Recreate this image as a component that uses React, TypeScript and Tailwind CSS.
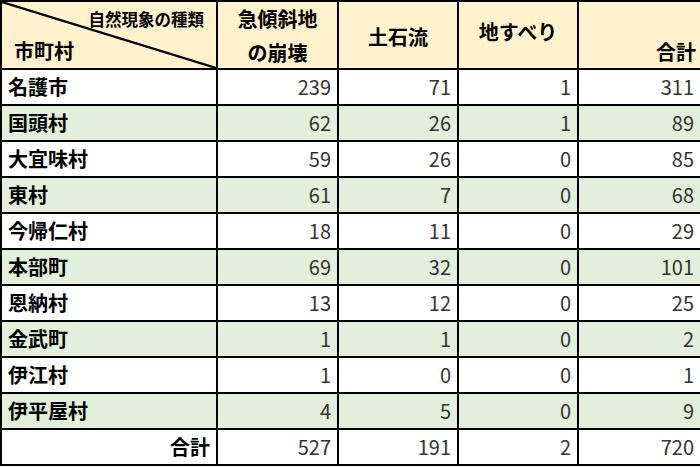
const ROWS: { name: string; vals: number[]; green: boolean }[] = [
  { name: '名護市', vals: [239, 71, 1, 311], green: false },
  { name: '国頭村', vals: [62, 26, 1, 89], green: true },
  { name: '大宜味村', vals: [59, 26, 0, 85], green: false },
  { name: '東村', vals: [61, 7, 0, 68], green: true },
  { name: '今帰仁村', vals: [18, 11, 0, 29], green: false },
  { name: '本部町', vals: [69, 32, 0, 101], green: true },
  { name: '恩納村', vals: [13, 12, 0, 25], green: false },
  { name: '金武町', vals: [1, 1, 0, 2], green: true },
  { name: '伊江村', vals: [1, 0, 0, 1], green: false },
  { name: '伊平屋村', vals: [4, 5, 0, 9], green: true },
];

const TOTALS = [527, 191, 2, 720];

const font = { fontFamily: '"Noto Sans CJK JP", "Noto Sans", sans-serif' };

export default function App() {
  return (
    <div className="w-[700px] h-[467px] bg-white overflow-hidden" style={font}>
      <table className="w-[700px] table-fixed border-collapse border-2 border-black text-black">
        <colgroup>
          <col className="w-[216px]" />
          <col className="w-[121px]" />
          <col className="w-[120px]" />
          <col className="w-[120px]" />
          <col className="w-[123px]" />
        </colgroup>
        <thead>
          <tr className="bg-[#fff2cc]">
            <th className="relative border-2 border-black p-0 font-bold">
              <svg className="absolute inset-0 w-full h-full" viewBox="0 0 216 66" preserveAspectRatio="none">
                <line x1="0" y1="0" x2="216" y2="66" stroke="#000" strokeWidth="2.2" />
              </svg>
              <div className="flex flex-col h-[66px] leading-none">
                <span className="text-[16.5px] text-right pr-[12px] pt-[9px]">自然現象の種類</span>
                <span className="text-[20px] text-left pl-[12px] pt-[13px]">市町村</span>
              </div>
            </th>
            <th className="border-2 border-black p-0 font-bold text-[20px]">
              <div className="flex flex-col items-center justify-between h-[66px] leading-none pt-[7px] pb-[5px]">
                <span>急傾斜地</span>
                <span>の崩壊</span>
              </div>
            </th>
            <th className="border-2 border-black p-0 font-bold text-[20px]">
              <div className="flex items-center justify-center h-[66px] leading-none pt-[4px]">土石流</div>
            </th>
            <th className="border-2 border-black p-0 font-bold text-[20px]">
              <div className="flex items-center justify-center h-[66px] leading-none pb-[6px]">地すべり</div>
            </th>
            <th className="border-2 border-black p-0 font-bold text-[20px]">
              <div className="flex items-end justify-end h-[66px] leading-none pr-[4px] pb-[6px]">合計</div>
            </th>
          </tr>
        </thead>
        <tbody>
          {ROWS.map((r) => (
            <tr key={r.name} className={`h-[36px] ${r.green ? 'bg-[#e2efda]' : 'bg-white'}`}>
              <td className="border-2 border-black px-[6px] py-0 font-bold text-[20px] leading-none">{r.name}</td>
              {r.vals.map((v, i) => (
                <td key={i} className="border-2 border-black pr-[6px] py-0 text-right text-[20px] leading-none text-[#333]">
                  {v}
                </td>
              ))}
            </tr>
          ))}
          <tr className="h-[36px] bg-white">
            <td className="border-2 border-black px-[6px] py-0 font-bold text-[20px] leading-none text-right">合計</td>
            {TOTALS.map((v, i) => (
              <td key={i} className="border-2 border-black pr-[6px] py-0 text-right text-[20px] leading-none text-[#333]">
                {v}
              </td>
            ))}
          </tr>
        </tbody>
      </table>
    </div>
  );
}
